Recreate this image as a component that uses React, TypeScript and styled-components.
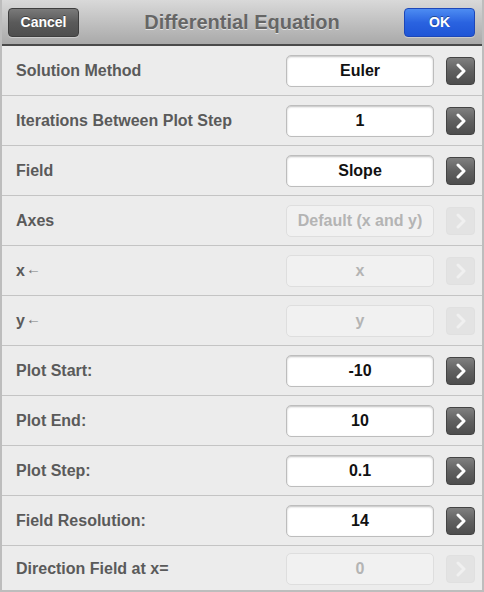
import React from "react";
import styled, { createGlobalStyle } from "styled-components";

const GlobalStyle = createGlobalStyle`
    html, body {
        margin: 0;
        padding: 0;
        background: #ececec;
    }
    body {
        font-family: "Liberation Sans", Arial, sans-serif;
    }
`;

interface RowData {
    label: string;
    value: string;
    disabled?: boolean;
    assign?: boolean;
}

const rows: Array<RowData> = [
    { label: "Solution Method", value: "Euler" },
    { label: "Iterations Between Plot Step", value: "1" },
    { label: "Field", value: "Slope" },
    { label: "Axes", value: "Default (x and y)", disabled: true },
    { label: "x", value: "x", disabled: true, assign: true },
    { label: "y", value: "y", disabled: true, assign: true },
    { label: "Plot Start:", value: "-10" },
    { label: "Plot End:", value: "10" },
    { label: "Plot Step:", value: "0.1" },
    { label: "Field Resolution:", value: "14" },
    { label: "Direction Field at x=", value: "0", disabled: true },
];

const Dialog = styled.div`
    width: 484px;
    height: 592px;
    box-sizing: border-box;
    border: 2px solid #bdbdbd;
    border-top: none;
    background: #ececec;
    overflow: hidden;
    display: flex;
    flex-direction: column;
`;

const Header = styled.div`
    height: 44px;
    flex-shrink: 0;
    display: flex;
    align-items: center;
    justify-content: space-between;
    padding: 0 7px 0 6px;
    background: linear-gradient(#d9d9d9, #a9a9a9);
    border-bottom: 2px solid #4a4a4a;
    position: relative;
`;

const Title = styled.div`
    position: absolute;
    left: 0;
    right: 0;
    text-align: center;
    font-size: 20px;
    font-weight: bold;
    color: #666;
    text-shadow: 0 1px 0 #e2e2e2;
    pointer-events: none;
`;

const HeaderButton = styled.button<{ $primary?: boolean }>`
    height: 29px;
    width: 71px;
    border-radius: 4px;
    font-family: "Liberation Sans", Arial, sans-serif;
    font-size: 14px;
    font-weight: bold;
    color: #fff;
    text-shadow: 0 -1px 0 rgba(0, 0, 0, 0.4);
    border: 1px solid ${(p) => (p.$primary ? "#1d47b8" : "#3e3e3e")};
    background: ${(p) =>
        p.$primary
            ? "linear-gradient(#4d8cf2, #2a63e0 50%, #1f55d6)"
            : "linear-gradient(#7a7a7a, #5a5a5a 50%, #4e4e4e)"};
    box-shadow: 0 1px 0 rgba(255, 255, 255, 0.35);
    padding: 0;
    z-index: 1;
`;

const List = styled.div`
    display: flex;
    flex-direction: column;
`;

const Row = styled.div`
    height: 50px;
    box-sizing: border-box;
    border-bottom: 1px solid #c4c4c4;
    display: flex;
    align-items: center;
    padding: 0 7px 0 14px;
    &:last-child {
        border-bottom: none;
        height: 44px;
        padding-top: 2px;
    }
`;

const Label = styled.div`
    flex: 1;
    display: flex;
    align-items: center;
    font-size: 16px;
    font-weight: bold;
    color: #5a5a5a;
`;

const AssignArrow = styled.span`
    font-size: 15px;
    font-weight: normal;
    color: #7a7a7a;
    margin-left: 1px;
    margin-top: -4px;
`;

const Field = styled.div<{ $disabled?: boolean }>`
    width: 148px;
    height: 32px;
    box-sizing: border-box;
    border-radius: 5px;
    border: 1px solid ${(p) => (p.$disabled ? "#dedede" : "#bdbdbd")};
    background: ${(p) => (p.$disabled ? "#f1f1f1" : "#fff")};
    box-shadow: ${(p) => (p.$disabled ? "none" : "inset 0 1px 2px rgba(0,0,0,0.25)")};
    display: flex;
    align-items: center;
    justify-content: center;
    font-size: 16px;
    font-weight: bold;
    color: ${(p) => (p.$disabled ? "#b4b4b4" : "#111")};
`;

const Arrow = styled.div<{ $disabled?: boolean }>`
    width: 29px;
    height: 28px;
    margin-left: 12px;
    box-sizing: border-box;
    border-radius: 4px;
    display: flex;
    align-items: center;
    justify-content: center;
    background: ${(p) =>
        p.$disabled ? "#e3e3e3" : "linear-gradient(#808080, #606060 50%, #4e4e4e)"};
    border: 1px solid ${(p) => (p.$disabled ? "#e0e0e0" : "#444")};
    svg {
        display: block;
    }
`;

const Chevron = ({ disabled }: { disabled?: boolean }) => (
    <svg width="12" height="16" viewBox="0 0 12 16">
        <path
            d="M3 2 L9 8 L3 14"
            fill="none"
            stroke={disabled ? "#f0f0f0" : "#fff"}
            strokeWidth="3"
            strokeLinecap="round"
            strokeLinejoin="round"
        />
    </svg>
);

const App = () => {
    return (
        <>
            <GlobalStyle />
            <Dialog>
                <Header>
                    <HeaderButton>Cancel</HeaderButton>
                    <Title>Differential Equation</Title>
                    <HeaderButton $primary>OK</HeaderButton>
                </Header>
                <List>
                    {rows.map((r) => (
                        <Row key={r.label}>
                            <Label>
                                {r.label}
                                {r.assign && <AssignArrow>{"\u2190"}</AssignArrow>}
                            </Label>
                            <Field $disabled={r.disabled}>{r.value}</Field>
                            <Arrow $disabled={r.disabled}>
                                <Chevron disabled={r.disabled} />
                            </Arrow>
                        </Row>
                    ))}
                </List>
            </Dialog>
        </>
    );
};

export default App;
